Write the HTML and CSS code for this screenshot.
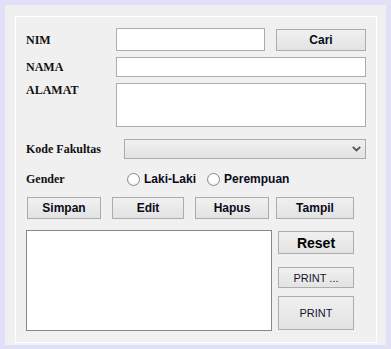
FILE: index.html
```html
<!DOCTYPE html>
<html>
<head>
<meta charset="utf-8">
<link rel="stylesheet" href="styles.css">
</head>
<body>
<div class="frame">
  <div class="panel">
    <div class="row row-nim">
      <span class="lbl">NIM</span>
      <div class="field field-nim"></div>
      <div class="btn btn-cari">Cari</div>
    </div>
    <div class="row row-nama">
      <span class="lbl">NAMA</span>
      <div class="field field-nama"></div>
    </div>
    <div class="row row-alamat">
      <span class="lbl">ALAMAT</span>
      <div class="field field-alamat"></div>
    </div>
    <div class="row row-kode">
      <span class="lbl lbl-kode">Kode Fakultas</span>
      <div class="combo">
        <svg class="chev" width="9" height="6" viewBox="0 0 9 6"><path d="M0.8 0.8 L4.5 4.5 L8.2 0.8" fill="none" stroke="#555" stroke-width="1.8"/></svg>
      </div>
    </div>
    <div class="row row-gender">
      <span class="lbl lbl-gender">Gender</span>
      <label class="radio"><span class="circle"></span><span class="rtext">Laki-Laki</span></label>
      <label class="radio radio-p"><span class="circle"></span><span class="rtext">Perempuan</span></label>
    </div>
    <div class="row row-actions">
      <div class="btn btn-simpan">Simpan</div>
      <div class="btn btn-edit">Edit</div>
      <div class="btn btn-hapus">Hapus</div>
      <div class="btn btn-tampil">Tampil</div>
    </div>
    <div class="row row-bottom">
      <div class="listbox"></div>
      <div class="side">
        <div class="btn btn-reset">Reset</div>
        <div class="btn btn-plain btn-print-dots">PRINT ...</div>
        <div class="btn btn-plain btn-print">PRINT</div>
      </div>
    </div>
  </div>
</div>
</body>
</html>
```

FILE: styles.css
```css
html, body {
  margin: 0;
  padding: 0;
}
body {
  background: #e0e0f8;
  width: 391px;
  height: 349px;
  overflow: hidden;
}
.frame {
  margin: 5px 0 0 5px;
  width: 381px;
  height: 340px;
  background: #f0f0f0;
  padding: 11px 0 0 10px;
  box-sizing: border-box;
}
.panel {
  width: 362px;
  height: 327px;
  border: 1px solid #ffffff;
  box-sizing: border-box;
  background: #f0f0f0;
}
.row {
  display: flex;
  align-items: center;
  padding-left: 10px;
}
.lbl {
  font-family: "Liberation Serif", "Times New Roman", serif;
  font-weight: bold;
  font-size: 12px;
  line-height: 14px;
  color: #111;
  width: 90px;
  flex: none;
}
.field {
  background: #fff;
  border: 1px solid #abadb3;
  box-sizing: border-box;
  flex: none;
}
.btn {
  box-sizing: border-box;
  border: 1px solid #acacac;
  background: linear-gradient(#f0f0f0, #e3e3e3);
  font-family: "Liberation Sans", Arial, sans-serif;
  font-weight: bold;
  font-size: 12px;
  color: #0a0a1a;
  display: flex;
  align-items: center;
  justify-content: center;
  flex: none;
}
.row-nim {
  margin-top: 11px;
  height: 23px;
}
.field-nim {
  width: 149px;
  height: 23px;
}
.btn-cari {
  width: 90px;
  height: 22px;
  margin-left: 11px;
  margin-top: 1px;
}
.row-nama {
  margin-top: 6px;
  height: 20px;
}
.field-nama {
  width: 250px;
  height: 20px;
}
.row-alamat {
  margin-top: 6px;
  align-items: flex-start;
}
.field-alamat {
  width: 250px;
  height: 44px;
}
.row-kode {
  margin-top: 12px;
  height: 20px;
}
.lbl-kode {
  width: 98px;
}
.combo {
  width: 242px;
  height: 20px;
  box-sizing: border-box;
  border: 1px solid #acacac;
  background: linear-gradient(#f0f0f0, #e3e3e3);
  display: flex;
  align-items: center;
  justify-content: flex-end;
  padding-right: 4px;
}
.chev {
  display: block;
}
.row-gender {
  margin-top: 12px;
  height: 16px;
}
.lbl-gender {
  width: 101px;
}
.radio {
  display: flex;
  align-items: center;
  font-family: "Liberation Sans", Arial, sans-serif;
  font-weight: bold;
  font-size: 12px;
  color: #0a0a1a;
}
.radio-p {
  margin-left: 11px;
}
.circle {
  width: 13px;
  height: 13px;
  border-radius: 50%;
  box-sizing: border-box;
  border: 1px solid #8a8a8a;
  background: radial-gradient(circle at 50% 40%, #ffffff 40%, #e6e6e6 100%);
  margin-right: 4px;
}
.row-actions {
  margin-top: 10px;
  height: 22px;
  padding-left: 11px;
}
.row-actions .btn {
  height: 22px;
}
.btn-simpan { width: 74px; }
.btn-edit { width: 72px; margin-left: 11px; }
.btn-hapus { width: 74px; margin-left: 11px; }
.btn-tampil { width: 78px; margin-left: 7px; }
.row-bottom {
  margin-top: 11px;
  align-items: flex-start;
}
.listbox {
  width: 246px;
  height: 101px;
  box-sizing: border-box;
  border: 1px solid #828790;
  background: #fff;
}
.side {
  margin-left: 6px;
  margin-top: 1px;
  display: flex;
  flex-direction: column;
  width: 76px;
}
.btn-reset {
  height: 23px;
  font-size: 14px;
  color: #000;
}
.btn-plain {
  font-weight: normal;
  font-size: 11px;
  color: #14142e;
}
.btn-print-dots {
  height: 21px;
  margin-top: 13px;
}
.btn-print {
  height: 34px;
  margin-top: 8px;
}
```
